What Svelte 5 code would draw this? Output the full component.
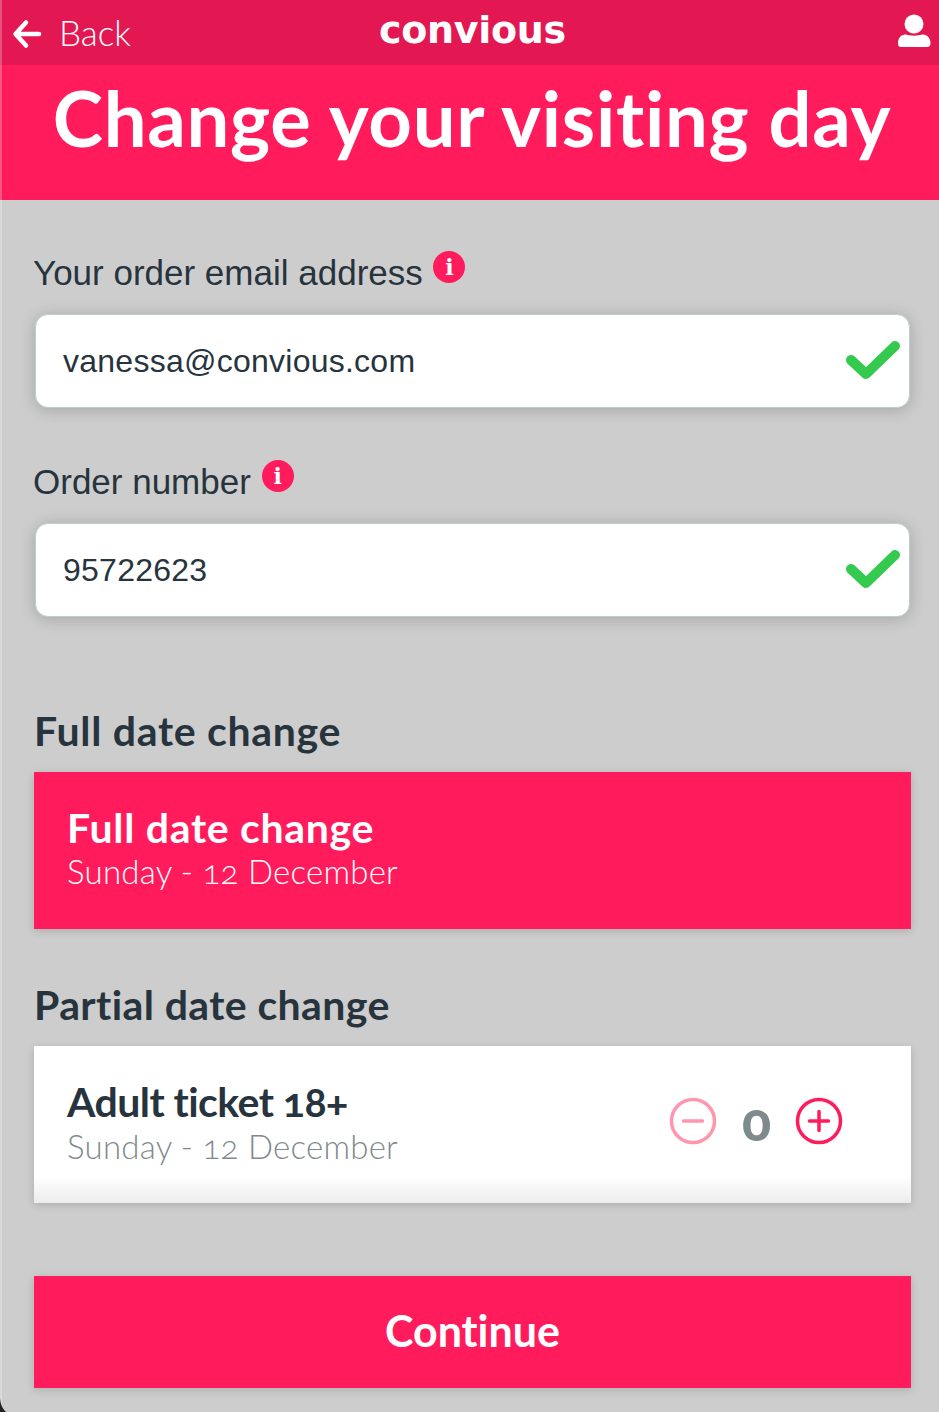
<script>
    const tickets = [{ name: "Adult ticket 18+", date: "Sunday - 12 December", count: 0 }]
</script>

<div class="page">
    <header class="topbar">
        <a class="back" href="#back">
            <svg width="30" height="30" viewBox="0 0 30 30">
                <path d="M14 3.5 L3.5 15 L14 26.5 M5 15 H27" fill="none" stroke="#fff" stroke-width="4.5" stroke-linecap="round" stroke-linejoin="round"/>
            </svg>
            <span>Back</span>
        </a>
        <div class="logo">convious</div>
        <svg class="user" width="34" height="34" viewBox="0 0 34 34">
            <circle cx="17" cy="10" r="9.5" fill="#fff"/>
            <path d="M1 29 C1 23 5 20.5 9 20.5 C12 22 22 22 25 20.5 C29 20.5 33.5 23 33.5 29 C33.5 32 32 33 30 33 H4 C2 33 1 32 1 29 Z" fill="#fff"/>
        </svg>
    </header>

    <div class="hero"><h1>Change your visiting day</h1></div>

    <main class="content">
        <section class="field">
            <label for="email">Your order email address <i class="info">i</i></label>
            <div class="input">
                <input id="email" value="vanessa@convious.com"/>
                <svg width="56" height="44" viewBox="0 0 56 44">
                    <path d="M5 21 L20 35 L49 7" fill="none" stroke="#34c94f" stroke-width="10" stroke-linecap="round" stroke-linejoin="round"/>
                </svg>
            </div>
        </section>
        <section class="field second">
            <label for="order">Order number <i class="info">i</i></label>
            <div class="input">
                <input id="order" value="95722623"/>
                <svg width="56" height="44" viewBox="0 0 56 44">
                    <path d="M5 21 L20 35 L49 7" fill="none" stroke="#34c94f" stroke-width="10" stroke-linecap="round" stroke-linejoin="round"/>
                </svg>
            </div>
        </section>

        <h2 class="full-title">Full date change</h2>
        <div class="card selected">
            <div class="name">Full date change</div>
            <div class="date">Sunday - 12 December</div>
        </div>

        <h2 class="partial-title">Partial date change</h2>
        {#each tickets as t}
            <div class="card ticket">
                <div>
                    <div class="name">{t.name}</div>
                    <div class="date">{t.date}</div>
                </div>
                <div class="counter">
                    <svg width="48" height="48" viewBox="0 0 48 48">
                        <circle cx="24" cy="24" r="21.5" fill="none" stroke="#ff95ae" stroke-width="3.5"/>
                        <path d="M14.5 24 H33.5" stroke="#ff95ae" stroke-width="3.5" stroke-linecap="round"/>
                    </svg>
                    <span class="count">{t.count}</span>
                    <svg width="48" height="48" viewBox="0 0 48 48">
                        <circle cx="24" cy="24" r="21.5" fill="none" stroke="#ff1b5c" stroke-width="3.5"/>
                        <path d="M14.5 24 H33.5 M24 14.5 V33.5" stroke="#ff1b5c" stroke-width="3.5" stroke-linecap="round"/>
                    </svg>
                </div>
            </div>
        {/each}

        <button class="continue">Continue</button>
    </main>
    <svg class="corner" width="14" height="14" viewBox="0 0 14 14">
        <path d="M0 0 C0.5 6 2 10 6 14 H0 Z" fill="#222"/>
    </svg>
</div>

<style>
    :global(body) {
        margin: 0;
        background: #cdcdcd;
    }
    .page {
        position: relative;
        height: 1412px;
        overflow: hidden;
        background: #cdcdcd;
        font-family: Lato, "Liberation Sans", sans-serif;
        font-variant-ligatures: none;
        color: #27343d;
    }
    .page::before {
        content: "";
        position: absolute;
        left: 0;
        top: 0;
        bottom: 0;
        width: 2px;
        background: rgba(255, 255, 255, 0.25);
        z-index: 2;
    }
    .topbar {
        display: flex;
        align-items: center;
        justify-content: space-between;
        position: relative;
        height: 65px;
        box-sizing: border-box;
        padding: 0 8px 0 12px;
        background: #e31853;
        color: white;
    }
    .back {
        display: flex;
        align-items: center;
        gap: 17px;
        color: white;
        text-decoration: none;
        font-size: 35px;
        font-weight: 300;
        margin-top: 2px;
    }
    .back span {
        margin-bottom: 3px;
    }
    .logo {
        position: absolute;
        left: 379px;
        top: 7px;
        font-family: "DejaVu Sans", sans-serif;
        font-weight: 700;
        font-size: 38px;
        line-height: 46px;
        letter-spacing: -0.3px;
    }
    .user {
        margin-top: -3px;
    }
    .hero {
        height: 135px;
        box-sizing: border-box;
        padding-left: 5px;
        background: #ff1b5c;
        text-align: center;
    }
    h1 {
        margin: 0;
        color: white;
        font-size: 76px;
        font-weight: 700;
        letter-spacing: 0.7px;
        line-height: 106px;
    }
    .content {
        display: flex;
        flex-direction: column;
        padding: 0 28px 0 34px;
    }
    .field {
        margin-top: 51px;
    }
    .field.second {
        margin-top: 52px;
    }
    label {
        display: block;
        margin-left: -1px;
        font-family: "Liberation Sans", sans-serif;
        font-size: 35px;
        line-height: 44px;
        margin-bottom: 19px;
    }
    .info {
        display: inline-block;
        width: 32px;
        height: 32px;
        margin-left: 1px;
        border-radius: 50%;
        background: #ff1b5c;
        color: white;
        font-family: "DejaVu Serif", serif;
        font-style: normal;
        font-weight: 700;
        font-size: 22px;
        line-height: 32px;
        text-align: center;
        vertical-align: 10px;
    }
    .input {
        display: flex;
        align-items: center;
        height: 94px;
        margin: 0 1px;
        padding: 0 7px 0 27px;
        box-sizing: border-box;
        background: white;
        border: 1px solid #bccfd0;
        border-radius: 13px;
        box-shadow: 0 2px 16px rgba(0, 0, 0, 0.2);
    }
    input {
        flex: 1;
        min-width: 0;
        border: 0;
        outline: 0;
        padding: 0;
        font-family: "Liberation Sans", sans-serif;
        font-size: 32px;
        letter-spacing: 0.25px;
        color: #27343d;
    }
    h2 {
        margin: 0;
        font-size: 41px;
        font-weight: 700;
        letter-spacing: 0.7px;
        line-height: 50px;
    }
    .full-title {
        margin-top: 89px;
        margin-bottom: 16px;
    }
    .partial-title {
        margin-top: 51px;
        margin-bottom: 16px;
        letter-spacing: 0.4px;
    }
    .card {
        width: 877px;
        height: 157px;
        box-sizing: border-box;
        padding: 33px 34px 0;
        box-shadow: 0 2px 8px rgba(0, 0, 0, 0.16);
    }
    .name {
        margin-left: -1px;
        font-size: 41px;
        font-weight: 700;
        letter-spacing: 0.7px;
        line-height: 46px;
        font-variant-numeric: oldstyle-nums;
    }
    .date {
        margin-left: -1px;
        font-size: 33px;
        font-weight: 300;
        letter-spacing: 0.25px;
        line-height: 40px;
        font-variant-numeric: oldstyle-nums;
    }
    .selected {
        background: #ff1b5c;
        color: white;
    }
    .ticket {
        display: flex;
        justify-content: space-between;
        background: linear-gradient(to bottom, white 83%, #ececec 100%);
    }
    .ticket .name {
        letter-spacing: -0.55px;
    }
    .ticket .date {
        margin-top: 1px;
        color: #7f8a8c;
    }
    .counter {
        display: flex;
        align-items: center;
        gap: 26px;
        height: 48px;
        margin: 18px 34px 0 0;
    }
    .count {
        width: 26px;
        margin-left: -1px;
        margin-right: 1px;
        text-align: center;
        font-size: 54px;
        font-weight: 900;
        line-height: 48px;
        color: #7f8a8c;
        font-variant-numeric: oldstyle-nums;
    }
    .continue {
        width: 877px;
        height: 112px;
        margin-top: 73px;
        padding: 0 0 4px;
        border: 0;
        background: #ff1b5c;
        color: white;
        font-family: inherit;
        font-variant-ligatures: none;
        font-size: 43px;
        font-weight: 700;
        box-shadow: 0 2px 8px rgba(0, 0, 0, 0.16);
    }
    .corner {
        position: absolute;
        left: 0;
        bottom: 0;
        z-index: 3;
    }
</style>
